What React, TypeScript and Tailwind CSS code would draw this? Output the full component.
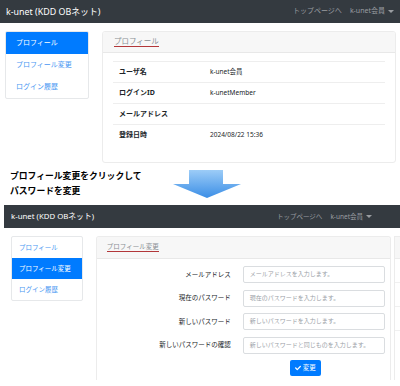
import { FaCheck } from "react-icons/fa";

const font = "font-['Noto_Sans','Noto_Sans_CJK_JP',sans-serif]";

function Caret() {
  return <span className="inline-block ml-[3px] align-middle border-x-[3px] border-t-[3px] border-x-transparent border-t-current" />;
}

function Navbar({ small }: { small?: boolean }) {
  return (
    <div
      className={
        "flex items-center justify-between bg-[#343a40] h-[23px] " +
        (small ? "ml-[4px] pl-[7px] pr-[28px]" : "pl-[6px] pr-[6px]")
      }
    >
      <span className={"text-white " + (small ? "text-[7.8px]" : "text-[8.9px]")}>k-unet (KDD OBネット)</span>
      <div className={"flex gap-[8px] text-[#9a9da1] " + (small ? "text-[6.5px]" : "text-[7px]")}>
        <span>トップページへ</span>
        <span>
          k-unet会員
          <Caret />
        </span>
      </div>
    </div>
  );
}

function Sidebar({ active, small }: { active: number; small?: boolean }) {
  const items = ["プロフィール", "プロフィール変更", "ログイン履歴"];
  return (
    <div className="border border-[#e6e8ea] rounded-[2px] bg-white overflow-hidden">
      {items.map((it, i) => (
        <div
          key={it}
          className={
            "flex items-center " +
            (small ? "h-[21px] pl-[7px] text-[6.5px] " : "h-[22px] pl-[10px] text-[7px] ") +
            (i === active ? "bg-[#007bff] text-white" : "text-[#4a97f2]")
          }
        >
          {it}
        </div>
      ))}
    </div>
  );
}

function CardHeader({ title, small }: { title: string; small?: boolean }) {
  return (
    <div className={"bg-[#f7f7f7] border-b border-[#e8e8e8] flex items-center " + (small ? "h-[22px] pl-[10px]" : "h-[21px] pl-[11px]")}>
      <span className={"text-[#8a8f94] border-b border-[#b2373a] leading-[1.3] " + (small ? "text-[6.5px]" : "text-[7.5px]")}>
        {title}
      </span>
    </div>
  );
}

const rows = [
  ["ユーザ名", "k-unet会員"],
  ["ログインID", "k-unetMember"],
  ["メールアドレス", ""],
  ["登録日時", "2024/08/22 15:36"],
];

const formRows = [
  ["メールアドレス", "メールアドレスを入力します。"],
  ["現在のパスワード", "現在のパスワードを入力します。"],
  ["新しいパスワード", "新しいパスワードを入力します。"],
  ["新しいパスワードの確認", "新しいパスワードと同じものを入力します。"],
];

function Arrow() {
  return (
    <svg width="70" height="30" viewBox="0 0 70 30">
      <defs>
        <linearGradient id="ag" x1="0" y1="0" x2="0" y2="1">
          <stop offset="0" stopColor="#9cccf7" />
          <stop offset="1" stopColor="#3b8ee6" />
        </linearGradient>
      </defs>
      <path d="M16 0 H50 V14 H68 L34 28 L0 14 H16 Z" fill="url(#ag)" />
    </svg>
  );
}

export default function App() {
  return (
    <div className={"w-[400px] h-[386px] bg-white overflow-hidden text-[#212529] " + font}>
      <Navbar />
      <div className="flex pt-[8px] pl-[5px]">
        <div className="w-[84px]">
          <Sidebar active={0} />
        </div>
        <div className="ml-[13px] w-[294px] h-[132px] border border-[#ececec] rounded-[3px] overflow-hidden">
          <CardHeader title="プロフィール" />
          <div className="px-[10px] pt-[8px]">
            {rows.map(([k, v]) => (
              <div key={k} className="flex items-center h-[21px] border-t border-[#eeeeee]">
                <span className="w-[97px] pl-[6px] text-[7px] font-bold">{k}</span>
                <span className="text-[6.5px]">{v}</span>
              </div>
            ))}
          </div>
        </div>
      </div>

      <div className="flex h-[42px]">
        <div className="w-[173px] pl-[10px] pt-[6px] text-[8.8px] font-bold leading-[15px] text-black">
          <div>プロフィール変更をクリックして</div>
          <div>パスワードを変更</div>
        </div>
        <div className="pt-[7px]">
          <Arrow />
        </div>
      </div>

      <Navbar small />
      <div className="flex pt-[8px] pl-[11px]">
        <div className="w-[72px]">
          <Sidebar active={1} small />
        </div>
        <div className="ml-[13px] w-[296px] h-[144px] border-x border-t border-[#ececec] rounded-t-[3px] overflow-hidden">
          <CardHeader title="プロフィール変更" small />
          <div className="pt-[7px] flex flex-col gap-[6.5px]">
            {formRows.map(([k, p]) => (
              <div key={k} className="flex items-center h-[17px]">
                <span className="w-[134px] text-right text-[6.5px]">{k}</span>
                <div className="ml-[12px] w-[142px] h-[17px] border border-[#dadde0] rounded-[2px] flex items-center pl-[6px] text-[6px] text-[#9aa0a6]">
                  {p}
                </div>
              </div>
            ))}
            <div className="flex pl-[193px]">
              <div className="w-[31px] h-[16px] bg-[#007bff] rounded-[2px] flex items-center justify-center gap-[2px] text-white text-[6.5px]">
                <FaCheck className="w-[6px] h-[6px]" />
                変更
              </div>
            </div>
          </div>
        </div>
        <div className="ml-[3px] w-[6px] h-[144px] border-l border-t border-[#ececec] flex flex-col">
          <div className="h-[22px] bg-[#f7f7f7] border-b border-[#ececec]" />
          <div className="h-[24px] border-b border-[#f0f0f0]" />
          <div className="h-[24px] border-b border-[#f0f0f0]" />
          <div className="h-[24px] border-b border-[#f0f0f0]" />
        </div>
      </div>
    </div>
  );
}
